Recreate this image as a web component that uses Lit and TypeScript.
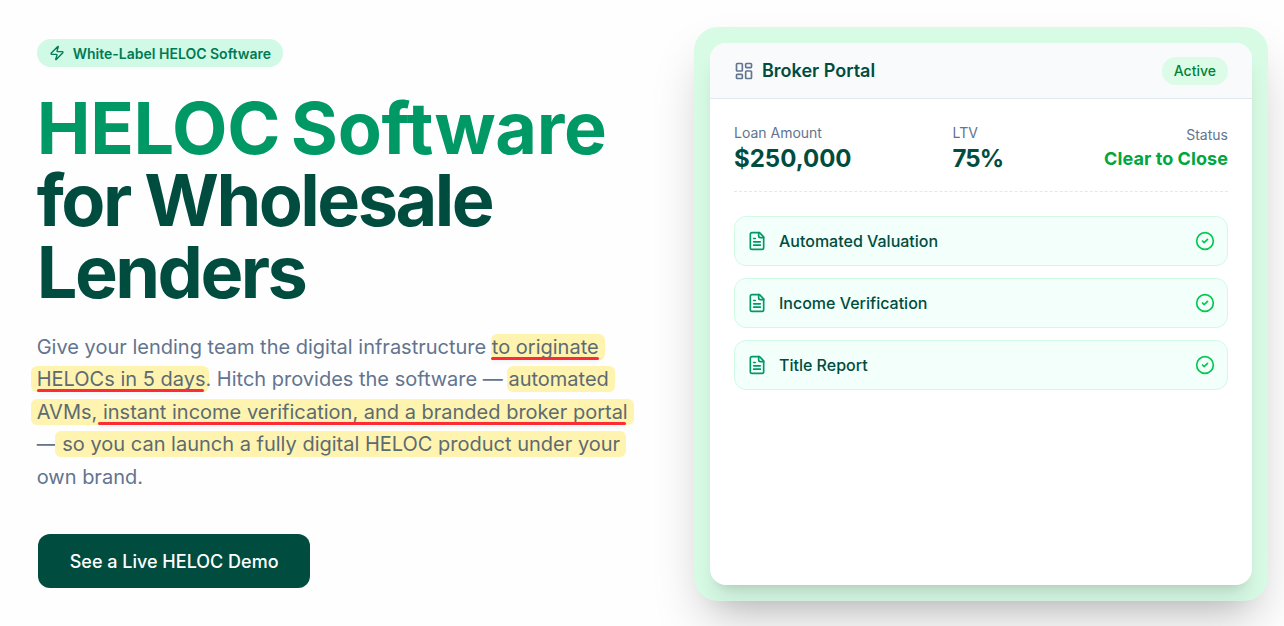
import { LitElement, html, css, svg } from 'lit'
import { customElement } from 'lit/decorators.js'

const icon = (size: number, body: unknown, cls = '') => html`
  <svg class=${cls} width=${size} height=${size} viewBox="0 0 24 24" fill="none" stroke="currentColor"
    stroke-width="2" stroke-linecap="round" stroke-linejoin="round">${body}</svg>
`

const zap = svg`<path d="M4 14a1 1 0 0 1-.78-1.63l9.9-10.2a.5.5 0 0 1 .86.46l-1.92 6.02A1 1 0 0 0 13 10h7a1 1 0 0 1 .78 1.63l-9.9 10.2a.5.5 0 0 1-.86-.46l1.92-6.02A1 1 0 0 0 11 14z"/>`
const dashboard = svg`<rect width="7" height="9" x="3" y="3" rx="1"/><rect width="7" height="5" x="14" y="3" rx="1"/><rect width="7" height="9" x="14" y="12" rx="1"/><rect width="7" height="5" x="3" y="16" rx="1"/>`
const fileText = svg`<path d="M15 2H6a2 2 0 0 0-2 2v16a2 2 0 0 0 2 2h12a2 2 0 0 0 2-2V7Z"/><path d="M14 2v4a2 2 0 0 0 2 2h4"/><path d="M10 9H8"/><path d="M16 13H8"/><path d="M16 17H8"/>`
const circleCheck = svg`<circle cx="12" cy="12" r="10"/><path d="m9 12 2 2 4-4"/>`

const checks = ['Automated Valuation', 'Income Verification', 'Title Report']

@customElement('app-root')
export class AppRoot extends LitElement {
  static styles = css`
    :host {
      display: block;
      height: 626px;
      overflow: hidden;
      background: #fefefe;
      font-family: Inter, 'Liberation Sans', sans-serif;
      color: #004d40;
    }

    .page {
      display: grid;
      grid-template-columns: 613.3px 574px;
      column-gap: 44px;
      padding: 27px 16px 0 36.7px;
    }

    .intro {
      padding-top: 12px;
    }

    .badge {
      display: inline-flex;
      align-items: center;
      gap: 8px;
      height: 28px;
      padding: 0 12px;
      border-radius: 999px;
      background: #d0fae5;
      color: #007a55;
      font-size: 14px;
      font-weight: 600;
    }

    h1 {
      margin: 25px 0 22.6px;
      font-size: 72px;
      line-height: 72px;
      font-weight: 700;
      letter-spacing: -0.035em;
      color: #004d40;
    }

    h1 span {
      display: block;
      color: #009966;
      letter-spacing: -0.3px;
      word-spacing: -6px;
    }

    .lead {
      margin: 0 0 41px;
      font-size: 20px;
      line-height: 32.5px;
      color: #62748e;
    }

    .hl {
      padding: 1px 6px;
      margin: 0 -6px;
      border-radius: 6px;
      background: #fff3b0;
      color: #5c6b72;
    }

    .hl.start {
      padding-left: 1px;
      margin-left: -1px;
    }

    .hl.short {
      padding-right: 4px;
      margin-right: -4px;
    }

    .hl.far {
      padding-left: 7px;
      margin-left: -7px;
    }

    .ul {
      position: relative;
    }

    .ul::after {
      content: '';
      position: absolute;
      left: -1px;
      right: 0;
      bottom: -1px;
      height: 3px;
      border-radius: 2px;
      background: #fb2c36;
      box-shadow: 0 2px 4px rgba(0, 0, 0, 0.06);
    }

    .ul.trim::after {
      left: 0;
      right: 1px;
    }

    .ul.wide::after {
      left: -5px;
      right: 2px;
    }

    .cta {
      display: inline-flex;
      align-items: center;
      height: 54px;
      margin-left: 1px;
      padding: 0 31.5px 0 32px;
      border-radius: 12px;
      background: #004d40;
      color: #fff;
      font-size: 18px;
      font-weight: 500;
    }

    .frame {
      height: 574px;
      box-sizing: border-box;
      padding: 16px;
      border-radius: 24px;
      background: #d8fbe6;
      box-shadow: 0 25px 50px -12px rgba(0, 0, 0, 0.25);
    }

    .card {
      height: 542px;
      overflow: hidden;
      border-radius: 16px;
      background: #fff;
      box-shadow: 0 20px 25px -5px rgba(0, 0, 0, 0.1), 0 8px 10px -6px rgba(0, 0, 0, 0.1);
    }

    .card-head {
      display: flex;
      align-items: center;
      justify-content: space-between;
      height: 55px;
      padding: 0 24px;
      border-bottom: 1px solid #e2e8f0;
      background: #f8fafc;
    }

    .title {
      display: flex;
      align-items: center;
      gap: 8px;
      font-size: 18px;
      font-weight: 600;
    }

    .title svg {
      color: #62748e;
    }

    .pill {
      display: flex;
      align-items: center;
      height: 28px;
      padding: 0 12px;
      border-radius: 999px;
      background: #dcfce7;
      color: #008236;
      font-size: 14px;
      font-weight: 500;
    }

    .card-body {
      padding: 24px;
    }

    .stats {
      display: flex;
      justify-content: space-between;
      align-items: flex-end;
      padding-bottom: 16px;
      border-bottom: 1px dashed #e2e8f0;
      margin-bottom: 24px;
    }

    .label {
      font-size: 14px;
      line-height: 20px;
      color: #62748e;
    }

    .value {
      font-size: 24px;
      line-height: 32px;
      font-weight: 700;
    }

    .value.tight {
      letter-spacing: -1px;
    }

    .status {
      text-align: right;
    }

    .status .value {
      font-size: 18px;
      line-height: 28px;
      color: #00a63e;
      padding-bottom: 2px;
      letter-spacing: 0.07px;
    }

    .checks {
      display: flex;
      flex-direction: column;
      gap: 12px;
    }

    .check {
      display: flex;
      align-items: center;
      gap: 12px;
      height: 50px;
      box-sizing: border-box;
      padding: 0 12px;
      border: 1px solid #d0fae5;
      border-radius: 12px;
      background: #f3fffa;
      font-size: 16px;
      font-weight: 500;
    }

    .check .doc {
      color: #009966;
    }

    .check .ok {
      margin-left: auto;
      color: #00c950;
    }
  `

  render() {
    return html`
      <div class="page">
        <section class="intro">
          <div class="badge">${icon(16, zap)}White-Label HELOC Software</div>
          <h1><span>HELOC Software</span>for Wholesale Lenders</h1>
          <p class="lead">
            Give your lending team the digital infrastructure
            <span class="hl start"><span class="ul">to originate</span></span>
            <span class="hl short"><span class="ul trim">HELOCs in 5 days</span></span>. Hitch provides the software —
            <span class="hl start">automated</span>
            <span class="hl">AVMs, <span class="ul wide">instant income verification, and a branded broker portal</span></span>
            — <span class="hl far">so you can launch a fully digital HELOC product under your</span> own brand.
          </p>
          <div class="cta">See a Live HELOC Demo</div>
        </section>

        <section class="frame">
          <div class="card">
            <header class="card-head">
              <div class="title">${icon(20, dashboard)}Broker Portal</div>
              <div class="pill">Active</div>
            </header>
            <div class="card-body">
              <div class="stats">
                <div>
                  <div class="label">Loan Amount</div>
                  <div class="value">$250,000</div>
                </div>
                <div>
                  <div class="label">LTV</div>
                  <div class="value tight">75%</div>
                </div>
                <div class="status">
                  <div class="label">Status</div>
                  <div class="value">Clear to Close</div>
                </div>
              </div>
              <div class="checks">
                ${checks.map(
                  (name) => html`
                    <div class="check">
                      ${icon(20, fileText, 'doc')}
                      <span>${name}</span>
                      ${icon(20, circleCheck, 'ok')}
                    </div>
                  `,
                )}
              </div>
            </div>
          </div>
        </section>
      </div>
    `
  }
}
